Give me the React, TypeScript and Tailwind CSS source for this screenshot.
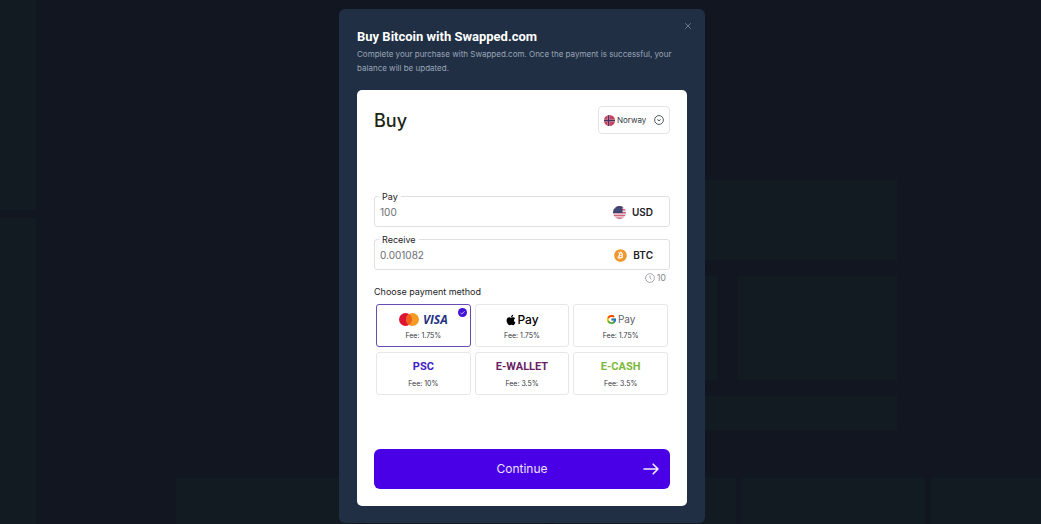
import { useState } from "react";
import type { ReactNode } from "react";
import { X } from "lucide-react";
import { FaApple, FaBitcoin } from "react-icons/fa";
import { FcGoogle } from "react-icons/fc";

function NorwayFlag() {
  return (
    <svg viewBox="0 0 24 24" className="size-[11px]" aria-hidden="true">
      <clipPath id="norway-clip">
        <circle cx="12" cy="12" r="12" />
      </clipPath>
      <g clipPath="url(#norway-clip)">
        <rect width="24" height="24" fill="#c9405c" />
        <path d="M0 12h24M10 0v24" stroke="#e3a9b8" strokeWidth="5" />
        <path d="M0 12h24M10 0v24" stroke="#4b2f5e" strokeWidth="3" />
      </g>
    </svg>
  );
}

function UsFlag() {
  return (
    <svg viewBox="0 0 26 26" className="size-[13px]" aria-hidden="true">
      <clipPath id="us-clip">
        <circle cx="13" cy="13" r="13" />
      </clipPath>
      <g clipPath="url(#us-clip)">
        <rect width="26" height="26" fill="#f0dfe6" />
        <path d="M0 1.5h26M0 7.5h26M0 13.5h26M0 19h26M0 24.5h26" stroke="#d0667c" strokeWidth="2.6" />
        <rect width="19" height="14" fill="#3a4270" />
        <path d="M4 5h13M3 9h14" stroke="#7d85ad" strokeWidth="1" strokeDasharray="1.5 2.5" />
      </g>
    </svg>
  );
}

function CircleChevron() {
  return (
    <svg viewBox="0 0 20 20" className="size-[10px]" fill="none" stroke="#3a3f46" aria-hidden="true">
      <circle cx="10" cy="10" r="8.8" strokeWidth="1.7" />
      <path d="M6.8 9.2l3.2 2.2 3.2-2.2" strokeWidth="1.9" />
    </svg>
  );
}

function Clock() {
  return (
    <svg viewBox="0 0 20 20" className="size-[10px]" fill="none" stroke="#8d9094" strokeWidth="1.5" aria-hidden="true">
      <circle cx="10" cy="10" r="8.8" />
      <path d="M10 4.5V10l3 2.5" />
    </svg>
  );
}

function LongArrow() {
  return (
    <svg
      viewBox="0 0 16 12"
      className="absolute right-[11px] h-3 w-4"
      fill="none"
      stroke="#f4efff"
      strokeWidth="1.6"
      strokeLinecap="round"
      strokeLinejoin="round"
      aria-hidden="true"
    >
      <path d="M1 6h14M10.2 1.2L15 6l-4.8 4.8" />
    </svg>
  );
}

function CardLogos() {
  return (
    <>
      <svg viewBox="0 0 40 26" className="h-[13px] w-5" aria-hidden="true">
        <circle cx="13" cy="13" r="13" fill="#dc1530" />
        <circle cx="27" cy="13" r="13" fill="#f59a23" />
        <path d="M20 2.05a13 13 0 0 1 0 21.9a13 13 0 0 1 0-21.9z" fill="#f2601f" />
      </svg>
      <span className="font-['Open_Sans',sans-serif] text-[12px] font-bold italic text-[#1f3482]">VISA</span>
    </>
  );
}

function CheckBadge() {
  return (
    <svg viewBox="0 0 20 20" className="absolute right-[3px] top-[3px] size-[9px]" aria-hidden="true">
      <circle cx="10" cy="10" r="10" fill="#4312d8" />
      <path d="M5.5 10.8l3 2.7 6-6.3" fill="none" stroke="#d9cffa" strokeWidth="2" />
    </svg>
  );
}

type Method = { id: string; fee: string; logo: ReactNode };

const methods: Method[] = [
  { id: "card", fee: "1.75%", logo: <CardLogos /> },
  {
    id: "apple",
    fee: "1.75%",
    logo: (
      <span className="flex items-center text-[12px] font-medium text-black">
        <FaApple className="size-3" />
        Pay
      </span>
    ),
  },
  {
    id: "google",
    fee: "1.75%",
    logo: (
      <span className="flex items-center gap-px text-[10px] text-[#5f6368]">
        <FcGoogle className="size-[11px]" />
        Pay
      </span>
    ),
  },
  {
    id: "psc",
    fee: "10%",
    logo: <span className="font-['Roboto',sans-serif] text-[11px] font-bold text-[#3f1dc4]">PSC</span>,
  },
  {
    id: "wallet",
    fee: "3.5%",
    logo: <span className="font-['Roboto',sans-serif] text-[11px] font-bold text-[#6a1f63]">E-WALLET</span>,
  },
  {
    id: "cash",
    fee: "3.5%",
    logo: <span className="font-['Roboto',sans-serif] text-[11px] font-bold text-[#7cb83a]">E-CASH</span>,
  },
];

function AmountField(props: { id: string; label: string; value: string; currency: string; icon: ReactNode }) {
  const [value, setValue] = useState(props.value);
  return (
    <div className="relative flex h-[31px] items-center rounded-[3px] border border-[#dfe0e3] pl-[5px] pr-4 pt-px">
      <label
        htmlFor={props.id}
        className="absolute -top-[6px] left-1 bg-white px-[3px] text-[9px] leading-3 text-[#1d2126]"
      >
        {props.label}
      </label>
      <input
        id={props.id}
        value={value}
        onChange={(e) => setValue(e.target.value)}
        inputMode="decimal"
        className="min-w-0 flex-1 bg-transparent text-[10px] text-[#6a6d72] outline-none"
      />
      <button type="button" className="flex items-center gap-1.5 text-[10px] font-semibold text-[#1d2126]">
        {props.icon}
        {props.currency}
      </button>
    </div>
  );
}

function Backdrop() {
  return (
    <div className="flex [grid-area:1/1]" aria-hidden="true">
      <div className="flex w-9 flex-col gap-2">
        <div className="h-[210px] bg-[#121a22]" />
        <div className="flex-1 bg-[#121a22]" />
      </div>
      <div className="flex flex-1 flex-col justify-end pl-[140px]">
        <div className="mb-12 mr-[144px] flex w-[220px] flex-col gap-4 self-end">
          <div className="h-20 bg-[#121a22]" />
          <div className="flex h-[104px] gap-5">
            <div className="w-10 bg-[#121a22]" />
            <div className="flex-1 bg-[#121a22]" />
          </div>
          <div className="h-[34px] bg-[#121a22]" />
        </div>
        <div className="grid h-[46px] grid-cols-[1fr_1fr_1fr_1fr_110px] gap-1.5">
          <div className="bg-[#121a22]" />
          <div className="bg-[#121a22]" />
          <div className="bg-[#121a22]" />
          <div className="bg-[#121a22]" />
          <div className="bg-[#121a22]" />
        </div>
      </div>
    </div>
  );
}

export default function App() {
  const [method, setMethod] = useState("card");
  return (
    <div className="grid min-h-screen bg-[#111620] font-['Inter',sans-serif]">
      <Backdrop />
      <div className="z-10 flex items-start justify-center pl-[3px] pt-[9px] [grid-area:1/1]">
        <section
          role="dialog"
          aria-labelledby="dialog-title"
          className="relative w-full max-w-[366px] rounded-md bg-[#202f44] px-[18px] pb-[17px] pt-[18px]"
        >
          <button type="button" aria-label="Close" className="absolute right-3 top-3 text-[#7c8797]">
            <X className="size-[10px]" strokeWidth={2} />
          </button>
          <h1
            id="dialog-title"
            className="font-['Roboto',sans-serif] text-[13px] font-bold leading-5 text-white"
          >
            Buy Bitcoin with Swapped.com
          </h1>
          <p className="pr-3 text-[8px] leading-[14px] text-[#9aa6b7]">
            Complete your purchase with Swapped.com. Once the payment is successful, your balance will be updated.
          </p>

          <form
            onSubmit={(e) => e.preventDefault()}
            className="mt-[15px] rounded-[5px] bg-white px-[17px] pb-[17px] pt-4"
          >
            <div className="flex items-center justify-between">
              <h2 className="text-[18px] font-medium text-[#1c2413]">Buy</h2>
              <div className="relative flex h-7 w-[72px] items-center rounded-sm border border-[#e3e4e7]">
                <span className="pointer-events-none absolute left-[5px]">
                  <NorwayFlag />
                </span>
                <select
                  aria-label="Country"
                  className="h-full w-full appearance-none bg-transparent pl-[18px] text-[8px] text-[#33373c] outline-none"
                >
                  <option>Norway</option>
                </select>
                <span className="pointer-events-none absolute right-[5px]">
                  <CircleChevron />
                </span>
              </div>
            </div>

            <div className="mt-[62px] grid gap-3">
              <AmountField id="pay" label="Pay" value="100" currency="USD" icon={<UsFlag />} />
              <AmountField
                id="receive"
                label="Receive"
                value="0.001082"
                currency="BTC"
                icon={<FaBitcoin className="size-[13px] text-[#f0982f]" />}
              />
            </div>
            <div className="mt-0.5 flex items-center justify-end gap-0.5 pr-1 text-[9px] leading-3 text-[#85888c]">
              <Clock />
              10
            </div>

            <fieldset>
              <legend className="pt-0.5 text-[9px] leading-3 text-[#1d2126]">Choose payment method</legend>
              <div className="mx-0.5 mt-1.5 grid grid-cols-3 gap-x-1 gap-y-[5px]">
                {methods.map((m) => (
                  <label
                    key={m.id}
                    className="relative flex h-[43px] cursor-pointer flex-col items-center justify-center gap-0.5 rounded-[3px] border border-[#e6e7ea] pt-0.5 has-checked:border-[#6a4bb5]"
                  >
                    <input
                      type="radio"
                      name="method"
                      value={m.id}
                      checked={method === m.id}
                      onChange={() => setMethod(m.id)}
                      className="sr-only"
                    />
                    <span className="flex h-4 items-center gap-1">{m.logo}</span>
                    <span className="text-[7px] leading-3 text-[#33373c]">Fee: {m.fee}</span>
                    {method === m.id && <CheckBadge />}
                  </label>
                ))}
              </div>
            </fieldset>

            <button
              type="submit"
              className="relative mt-[54px] flex h-10 w-full items-center justify-center rounded-md bg-[#4a00e6] text-[12px] text-[#ebe2ff]"
            >
              Continue
              <LongArrow />
            </button>
          </form>
        </section>
      </div>
    </div>
  );
}
